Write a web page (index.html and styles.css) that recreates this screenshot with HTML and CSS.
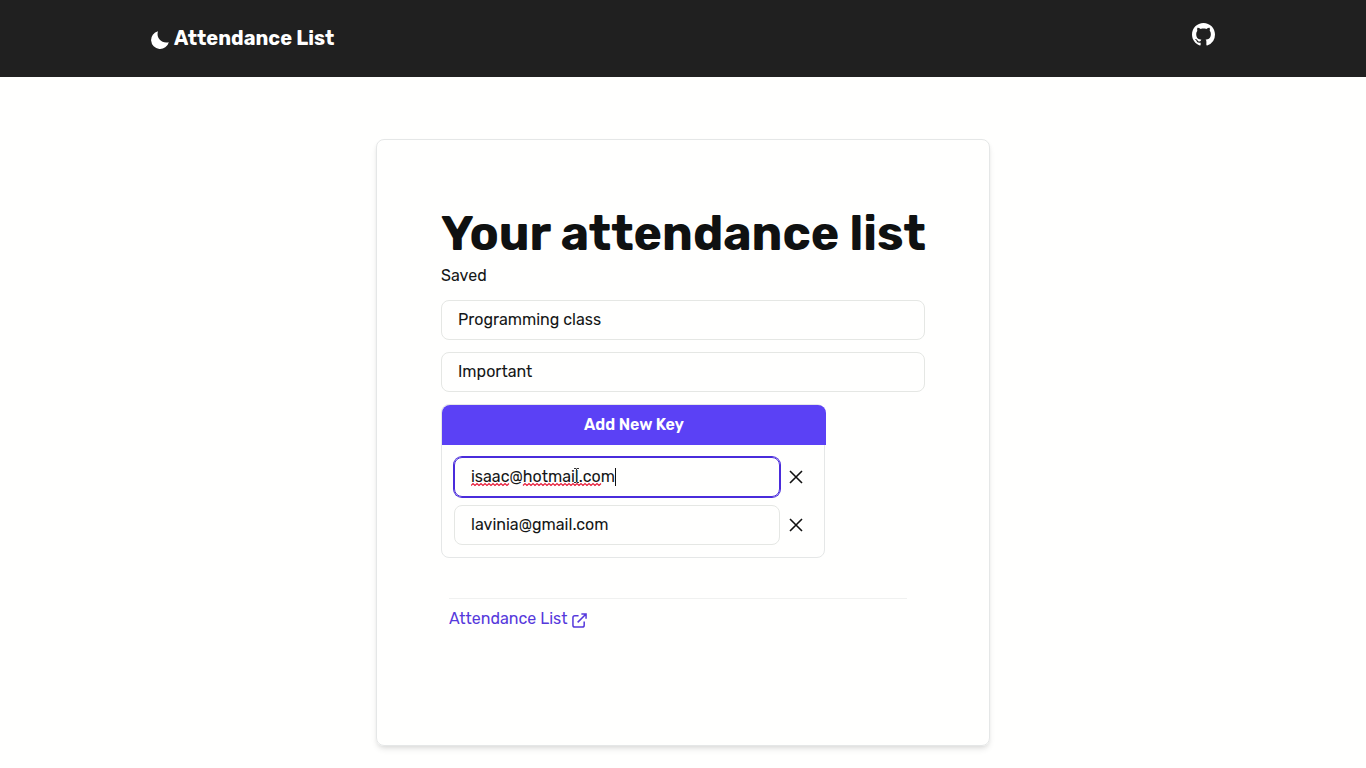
FILE: index.html
```html
<!DOCTYPE html>
<html lang="en">
<head>
<meta charset="utf-8">
<meta name="viewport" content="width=device-width, initial-scale=1">
<title>Attendance List</title>
<link rel="stylesheet" href="styles.css">
</head>
<body>
<header class="navbar">
  <div class="navbar-inner">
    <a class="brand" href="#">
      <svg class="moon" viewBox="0 0 18 18" aria-hidden="true"><path d="M7 0.2A9 9 0 1 0 17.8 11.2C14.3 12.1 10.800 11.200 8.600 8.600C6.600 6.200 6 3.200 7 .2Z" fill="currentColor"/></svg>
      <span>Attendance List</span>
    </a>
    <a class="github" href="#" aria-label="GitHub">
      <svg viewBox="0 0 16 16" aria-hidden="true"><path fill="currentColor" d="M8 0C3.58 0 0 3.58 0 8c0 3.54 2.29 6.53 5.47 7.59.4.07.55-.17.55-.38 0-.19-.01-.82-.01-1.49-2.01.37-2.53-.49-2.69-.94-.09-.23-.48-.94-.82-1.13-.28-.15-.68-.52-.01-.53.63-.01 1.08.58 1.23.82.72 1.21 1.87.87 2.33.66.07-.52.28-.87.51-1.07-1.78-.2-3.64-.89-3.64-3.95 0-.87.31-1.59.82-2.15-.08-.2-.36-1.02.08-2.12 0 0 .67-.21 2.2.82.64-.18 1.32-.27 2-.27s1.36.09 2 .27c1.53-1.04 2.2-.82 2.2-.82.44 1.1.16 1.92.08 2.12.51.56.82 1.27.82 2.15 0 3.07-1.87 3.75-3.65 3.95.29.25.54.73.54 1.48 0 1.07-.01 1.93-.01 2.2 0 .21.15.46.55.38A8.01 8.01 0 0 0 16 8c0-4.42-3.58-8-8-8Z"/></svg>
    </a>
  </div>
</header>
<main class="page">
  <section class="card">
    <h1 class="title">Your attendance list</h1>
    <p class="status">Saved</p>
    <form class="form">
      <input class="field" type="text" aria-label="List title" value="Programming class">
      <input class="field" type="text" aria-label="List description" value="Important">
      <div class="keys">
        <button class="add-key" type="button">Add New Key</button>
        <div class="key-list">
          <div class="key-row">
            <div class="key-field">
              <input class="field field-active" type="text" aria-label="Key 1" value="isaac@hotmail.com">
              <svg class="edit-marks" viewBox="0 0 150 24" aria-hidden="true">
                <path d="M0 17.500l2-2 2 2 2-2 2 2 2-2 2 2 2-2 2 2 2-2 2 2 2-2 2 2 2-2 2 2 2-2 2 2 2-2 2 2 2-2M52 17.500l2-2 2 2 2-2 2 2 2-2 2 2 2-2 2 2 2-2 2 2 2-2 2 2 2-2 2 2 2-2 2 2 2-2 2 2 2-2 2 2 2-2 2 2 2-2 2 2 2-2 2 2 2-2 2 2 2-2 2 2 2-2 2 2 2-2 2 2 2-2 2 2 2-2 2 2 2-2" fill="none" stroke="#e81f3c" stroke-width="1.2"/>
                <path d="M144.500 0v18" stroke="#111"/>
                <path d="M103 .5h2l.5 1 .5-1h2M105.500 1v13M103 14.500h2l.5-1 .5 1h2" fill="none" stroke="#333"/>
              </svg>
            </div>
            <button class="remove" type="button" aria-label="Remove key 1"><svg viewBox="0 0 14 14" aria-hidden="true"><path d="M1 1l12 12M13 1L1 13"/></svg></button>
          </div>
          <div class="key-row">
            <div class="key-field">
              <input class="field" type="text" aria-label="Key 2" value="lavinia@gmail.com">
            </div>
            <button class="remove" type="button" aria-label="Remove key 2"><svg viewBox="0 0 14 14" aria-hidden="true"><path d="M1 1l12 12M13 1L1 13"/></svg></button>
          </div>
        </div>
      </div>
    </form>
    <footer class="card-footer">
      <a class="list-link" href="#">Attendance List
        <svg viewBox="0 0 16 16" aria-hidden="true"><path d="M7 3H3a2 2 0 0 0-2 2v8a2 2 0 0 0 2 2h8a2 2 0 0 0 2-2V9M10 1h5v5M15 1L6 10"/></svg>
      </a>
    </footer>
  </section>
</main>
</body>
</html>
```
FILE: styles.css
```css
* { box-sizing: border-box; }

body {
  margin: 0;
  background: #fffffe;
  color: #141616;
  font: 16px/24px Rubik, Roboto, sans-serif;
}

a { color: inherit; text-decoration: none; }
svg { display: block; }

.navbar { background: #202020; color: #fff; }
.navbar-inner {
  display: flex;
  align-items: center;
  justify-content: space-between;
  max-width: 1096px;
  min-height: 77px;
  margin: 0 auto;
  padding: 0 16px;
}
.brand {
  display: flex;
  align-items: center;
  gap: 5px;
  padding-bottom: 2px;
  font-size: 20px;
  font-weight: 700;
}
.moon { width: 18px; height: 18px; margin-top: 4px; }
.github { padding-bottom: 8px; }
.github svg { width: 23px; height: 23px; }

.page { padding: 62px 16px 22px; }
.card {
  max-width: 614px;
  margin: 0 auto;
  padding: 64px 64px 114px;
  border: 1px solid #e5e7e7;
  border-radius: 8px;
  box-shadow: 0 4px 6px -1px #0000001a, 0 2px 4px -1px #0000000f;
}
.title {
  margin: 0;
  color: #0f1111;
  font-size: 48px;
  line-height: 60px;
  font-weight: 700;
  white-space: nowrap;
}
.status { margin: 0; }

.form {
  display: flex;
  flex-direction: column;
  gap: 12px;
  padding-top: 12px;
}
.field {
  display: block;
  width: 100%;
  height: 40px;
  padding: 0 16px 2px;
  border: 1px solid #e5e7e4;
  border-radius: 8px;
  background: transparent;
  color: inherit;
  font: inherit;
  outline: none;
}
.field-active { border-color: #4a2cdb; box-shadow: 0 0 0 1px #4a2cdb; }

.keys {
  width: 100%;
  max-width: 384px;
  border: 1px solid #e5e7e7;
  border-radius: 8px;
}
.add-key {
  width: calc(100% + 2px);
  height: 40px;
  padding: 0;
  border: 0;
  border-radius: 8px 8px 0 0;
  background: #5b41f5;
  color: #fff;
  font: inherit;
  font-weight: 600;
}
.key-list {
  display: flex;
  flex-direction: column;
  gap: 8px;
  padding: 12px;
}
.key-row { display: flex; align-items: center; }
.key-field { position: relative; flex: 1; }
.edit-marks {
  position: absolute;
  top: 11px;
  left: 17px;
  width: 150px;
  height: 24px;
  pointer-events: none;
}
.remove {
  display: grid;
  place-items: center;
  width: 32px;
  height: 32px;
  padding: 0;
  border: 0;
  background: none;
  color: #111;
}
.remove svg {
  width: 14px;
  height: 14px;
  fill: none;
  stroke: currentColor;
  stroke-width: 1.6;
}

.card-footer {
  margin: 40px 18px 0 8px;
  padding-top: 8px;
  border-top: 1px solid #f0f1f0;
}
.list-link {
  display: inline-flex;
  align-items: center;
  gap: 4px;
  color: #5639dc;
}
.list-link svg {
  width: 15px;
  height: 15px;
  margin-top: 2px;
  fill: none;
  stroke: currentColor;
  stroke-width: 1.6;
}
```
